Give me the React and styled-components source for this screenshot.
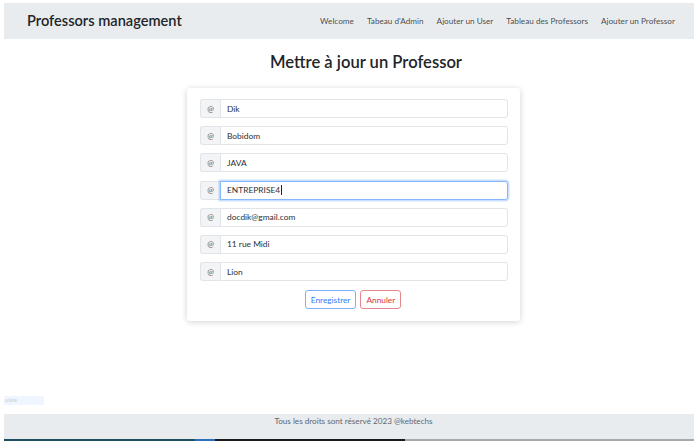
import React from "react";
import styled, { createGlobalStyle } from "styled-components";

const Global = createGlobalStyle`
  html, body { margin: 0; padding: 0; background: #fff; }
  body { font-family: Lato, "Noto Sans", sans-serif; color: #212529; }
  * { box-sizing: border-box; }
`;

const Page = styled.div`
  width: 699px;
  height: 447px;
  padding: 3px 5px 0 4px;
  display: flex;
  flex-direction: column;
  overflow: hidden;
`;

const Navbar = styled.nav`
  height: 36px;
  background: #e9ecef;
  display: flex;
  align-items: center;
  justify-content: space-between;
  padding: 0 19px 0 23px;
`;

const Brand = styled.div`
  font-size: 14.6px;
  font-weight: 600;
  color: #212529;
  margin-top: -2px;
`;

const NavLinks = styled.div`
  display: flex;
  gap: 13px;
  align-items: center;
`;

const NavLink = styled.a`
  font-size: 8.2px;
  color: rgba(0, 0, 0, 0.72);
  text-decoration: none;
`;

const Main = styled.main`
  height: 375px;
  display: flex;
  flex-direction: column;
`;

const Title = styled.h2`
  margin: 12px 0 0;
  padding-left: 34px;
  text-align: center;
  font-size: 16.6px;
  font-weight: 600;
  line-height: 22px;
  color: #212529;
`;

const CardWrap = styled.div`
  display: flex;
  justify-content: center;
  padding-left: 9px;
  margin-top: 15px;
`;

const Card = styled.form`
  width: 333px;
  background: #fff;
  border-radius: 3px;
  box-shadow: 0 1px 6px rgba(0, 0, 0, 0.18);
  padding: 11px 12px 12px 13px;
  display: flex;
  flex-direction: column;
  gap: 8.2px;
`;

const Group = styled.div`
  display: flex;
  height: 19px;
`;

const Addon = styled.span`
  width: 20px;
  display: flex;
  align-items: center;
  justify-content: center;
  background: #f3f4f6;
  border: 1px solid #e1e4e8;
  border-right: none;
  border-radius: 3px 0 0 3px;
  font-size: 8px;
  color: #555;
`;

const Field = styled.div`
  flex: 1;
  display: flex;
  align-items: center;
  padding-left: 6px;
  font-size: 8.4px;
  color: #2b2f33;
  background: #fff;
  border: 1px solid ${(p) => (p.$focus ? "#86b7fe" : "#e1e4e8")};
  border-radius: 0 3px 3px 0;
  box-shadow: ${(p) => (p.$focus ? "0 0 0 1.5px rgba(13,110,253,0.22)" : "none")};
  position: relative;
  z-index: ${(p) => (p.$focus ? 1 : 0)};
`;

const Caret = styled.span`
  display: inline-block;
  width: 1px;
  height: 10px;
  background: #212529;
  margin-left: 0.5px;
`;

const Actions = styled.div`
  display: flex;
  justify-content: center;
  gap: 4px;
  margin-top: 0.8px;
  padding-right: 2px;
`;

const Button = styled.button`
  height: 19px;
  padding: 0 5px;
  font-family: inherit;
  font-size: 8.3px;
  background: #fff;
  border-radius: 3px;
  border: 1px solid ${(p) => (p.$variant === "danger" ? "#e8868f" : "#7fb1fb")};
  color: ${(p) => (p.$variant === "danger" ? "#dc3545" : "#2f7dfb")};
  cursor: pointer;
`;

const Ghost = styled.div`
  margin-top: auto;
  margin-bottom: 9px;
  width: 40px;
  height: 9px;
  background: #f0f6ff;
  font-size: 5px;
  line-height: 9px;
  color: #c5ccd4;
  padding-left: 1px;
`;

const Footer = styled.footer`
  height: 25px;
  background: #e9ecef;
  display: flex;
  justify-content: center;
  padding-top: 2px;
  padding-left: 9px;
  font-size: 8.15px;
  color: #5f666d;
`;

const Strip = styled.div`
  height: 2px;
  display: flex;
`;

const Seg = styled.div`
  width: ${(p) => p.$w}px;
  flex: ${(p) => (p.$grow ? 1 : "none")};
  background: ${(p) => p.$c};
`;

const fields = [
  "Dik",
  "Bobidom",
  "JAVA",
  "ENTREPRISE4",
  "docdik@gmail.com",
  "11 rue Midi",
  "Lion",
];

export default function App() {
  return (
    <>
      <Global />
      <Page>
        <Navbar>
          <Brand>Professors management</Brand>
          <NavLinks>
            <NavLink>Welcome</NavLink>
            <NavLink>Tabeau d'Admin</NavLink>
            <NavLink>Ajouter un User</NavLink>
            <NavLink>Tableau des Professors</NavLink>
            <NavLink>Ajouter un Professor</NavLink>
          </NavLinks>
        </Navbar>
        <Main>
          <Title>Mettre à jour un Professor</Title>
          <CardWrap>
            <Card>
              {fields.map((f, i) => (
                <Group key={i}>
                  <Addon>@</Addon>
                  <Field $focus={i === 3}>
                    {f}
                    {i === 3 && <Caret />}
                  </Field>
                </Group>
              ))}
              <Actions>
                <Button type="button">Enregistrer</Button>
                <Button type="button" $variant="danger">
                  Annuler
                </Button>
              </Actions>
            </Card>
          </CardWrap>
          <Ghost>ulaire</Ghost>
        </Main>
        <Footer>Tous les droits sont réservé 2023 @kebtechs</Footer>
        <Strip>
          <Seg $w={191} $c="#1d4f5e" />
          <Seg $w={20} $c="#2f6fc0" />
          <Seg $w={190} $c="#1a1a1a" />
          <Seg $grow $c="#a8a8a8" />
        </Strip>
      </Page>
    </>
  );
}
